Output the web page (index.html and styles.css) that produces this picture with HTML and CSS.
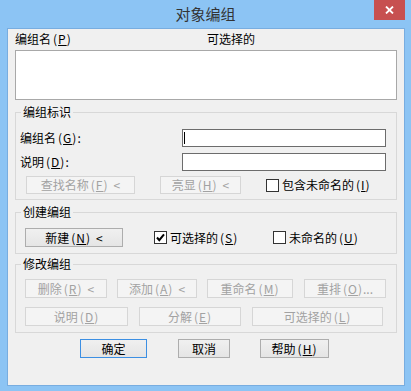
FILE: index.html
```html
<!DOCTYPE html>
<html lang="zh-CN">
<head>
    <meta charset="UTF-8">
    <meta name="viewport" content="width=device-width, initial-scale=1.0">
    <title>对象编组</title>
    <link rel="stylesheet" href="styles.css">
</head>
<body>
    <div class="window">
        <div class="titlebar">
            <span></span>
            <span class="title">对象编组</span>
            <span class="close">
                <svg width="9" height="8" viewBox="0 0 9 8"><path d="M1 0.5 L8 7.5 M8 0.5 L1 7.5" stroke="#fff" stroke-width="1.8"/></svg>
            </span>
        </div>

        <div class="client">
            <div class="list-head">
                <span class="col-name">编组名<span class="key">(<u>P</u>)</span></span>
                <span>可选择的</span>
            </div>
            <div class="listbox"></div>

            <fieldset class="group g-ident">
                <legend>编组标识</legend>
                <div class="field-row">
                    <span class="field-label">编组名<span class="key">(<u>G</u>)</span>:</span>
                    <div class="textbox"><span class="caret"></span></div>
                </div>
                <div class="field-row row-desc">
                    <span class="field-label">说明<span class="key">(<u>D</u>)</span>:</span>
                    <div class="textbox"></div>
                </div>
                <div class="btn-row row-find">
                    <button class="btn btn-find" disabled>查找名称<span class="key">(<u>F</u>)</span><span class="arrow">&lt;</span></button>
                    <button class="btn btn-hilite" disabled>亮显<span class="key">(<u>H</u>)</span><span class="arrow">&lt;</span></button>
                    <label class="check check-unnamed"><span class="box"></span>包含未命名的<span class="key">(<u>I</u>)</span></label>
                </div>
            </fieldset>

            <fieldset class="group g-create">
                <legend>创建编组</legend>
                <div class="btn-row">
                    <button class="btn btn-new">新建<span class="key">(<u>N</u>)</span><span class="arrow">&lt;</span></button>
                    <label class="check check-sel"><span class="box"><svg width="11" height="11" viewBox="0 0 11 11"><path d="M2 5.5 L4.3 8.2 L9 2.3" fill="none" stroke="#000" stroke-width="2"/></svg></span>可选择的<span class="key">(<u>S</u>)</span></label>
                    <label class="check"><span class="box"></span>未命名的<span class="key">(<u>U</u>)</span></label>
                </div>
            </fieldset>

            <fieldset class="group g-modify">
                <legend>修改编组</legend>
                <div class="btn-row">
                    <button class="btn b-remove" disabled>删除<span class="key">(<u>R</u>)</span><span class="arrow">&lt;</span></button>
                    <button class="btn b-add" disabled>添加<span class="key">(<u>A</u>)</span><span class="arrow">&lt;</span></button>
                    <button class="btn b-rename" disabled>重命名<span class="key">(<u>M</u>)</span></button>
                    <button class="btn b-reorder" disabled>重排<span class="key">(<u>O</u>)</span>...</button>
                </div>
                <div class="btn-row row-second">
                    <button class="btn b-desc" disabled>说明<span class="key">(<u>D</u>)</span></button>
                    <button class="btn b-explode" disabled>分解<span class="key">(<u>E</u>)</span></button>
                    <button class="btn b-select" disabled>可选择的<span class="key">(<u>L</u>)</span></button>
                </div>
            </fieldset>

            <div class="dialog-buttons">
                <button class="btn btn-ok">确定</button>
                <button class="btn btn-cancel">取消</button>
                <button class="btn btn-help">帮助<span class="key">(<u>H</u>)</span></button>
            </div>
        </div>
    </div>
</body>
</html>
```

FILE: styles.css
```css
body {
    margin: 0;
    background: #8cc4f4;
    font-family: "Noto Sans CJK SC", "Liberation Sans", sans-serif;
    font-size: 12px;
    color: #000;
    overflow: hidden;
}
.window {
    width: 411px;
    height: 391px;
}
.titlebar {
    display: grid;
    grid-template-columns: 1fr auto 1fr;
    height: 28px;
}
.title {
    align-self: center;
    font-size: 15px;
    line-height: 20px;
    color: #333;
}
.close {
    justify-self: end;
    align-self: start;
    width: 31px;
    height: 20px;
    margin-right: 6px;
    background: #c75050;
    display: flex;
    align-items: center;
    justify-content: center;
}
.client {
    margin-left: 7px;
    width: 398px;
    height: 358px;
    box-sizing: border-box;
    border: 1px solid #78ade0;
    background: #f0f0f0;
    padding: 3px 7px 0 7px;
}
.key {
    margin-left: 2px;
    letter-spacing: 1px;
}
.arrow {
    margin-left: 5px;
}
.list-head {
    display: flex;
    height: 14px;
    line-height: 14px;
}
.col-name {
    width: 192px;
}
.listbox {
    margin-top: 4px;
    height: 50px;
    box-sizing: border-box;
    border: 1px solid #a8a8a8;
    background: #fff;
}

/* group boxes */
.group {
    margin: 5px 0 0;
    padding: 0;
    border: 1px solid #d8d8d8;
    min-width: 0;
}
.group legend {
    margin-left: 5px;
    padding: 0 2px;
    line-height: 14px;
    font-size: 12px;
}
.g-ident {
    padding: 10px 10px 5px 0;
}
.g-create {
    padding: 9px 0 6px 0;
}
.g-modify {
    margin-top: 3px;
    padding: 8px 0 6px 0;
}

.field-row {
    display: flex;
    justify-content: space-between;
    align-items: center;
    height: 18px;
}
.field-label {
    padding-left: 4px;
    line-height: 14px;
}
.row-desc {
    margin-top: 6px;
}
.textbox {
    width: 204px;
    height: 18px;
    box-sizing: border-box;
    border: 1px solid #6c6c6c;
    background: #fff;
    display: flex;
    align-items: center;
}
.caret {
    width: 1px;
    height: 12px;
    margin-left: 1px;
    background: #000;
}

.btn-row {
    display: flex;
    align-items: center;
}
.row-find {
    margin-top: 5px;
}
.row-second {
    margin-top: 9px;
}

/* buttons */
.btn {
    box-sizing: border-box;
    height: 19px;
    padding: 0;
    font-family: inherit;
    font-size: 12px;
    line-height: 14px;
    color: #000;
    border: 1px solid #adadad;
    background: linear-gradient(#f0f0f0, #e5e5e5);
    border-radius: 0;
    white-space: nowrap;
}
.btn:disabled {
    color: #a2a2a2;
    border-color: #d6d6d6;
    background: #f4f4f4;
}
.btn-ok {
    border-color: #3c8fe3;
}

.btn-find { height: 18px; width: 109px; margin-left: 10px; }
.btn-hilite { height: 18px; width: 81px; margin-left: 25px; }
.btn-new { width: 98px; margin-left: 9px; }

.b-remove { width: 82px; margin-left: 9px; }
.b-add { width: 80px; margin-left: 10px; }
.b-rename { width: 86px; margin-left: 10px; }
.b-reorder { width: 82px; margin-left: 11px; }
.b-desc { width: 103px; margin-left: 9px; }
.b-explode { width: 102px; margin-left: 11px; }
.b-select { width: 131px; margin-left: 11px; }

/* check boxes */
.check {
    display: flex;
    align-items: center;
    line-height: 14px;
}
.check .box {
    width: 13px;
    height: 13px;
    box-sizing: border-box;
    border: 1px solid #333;
    background: #fff;
    margin-right: 3px;
    display: flex;
    align-items: center;
    justify-content: center;
}
.check-unnamed {
    margin-left: 25px;
}
.check-sel {
    width: 119px;
    margin-left: 31px;
}

.dialog-buttons {
    display: flex;
    margin-top: 6px;
}
.btn-ok { width: 67px; margin-left: 65px; }
.btn-cancel { width: 52px; margin-left: 31px; }
.btn-help { width: 69px; margin-left: 30px; }
```
